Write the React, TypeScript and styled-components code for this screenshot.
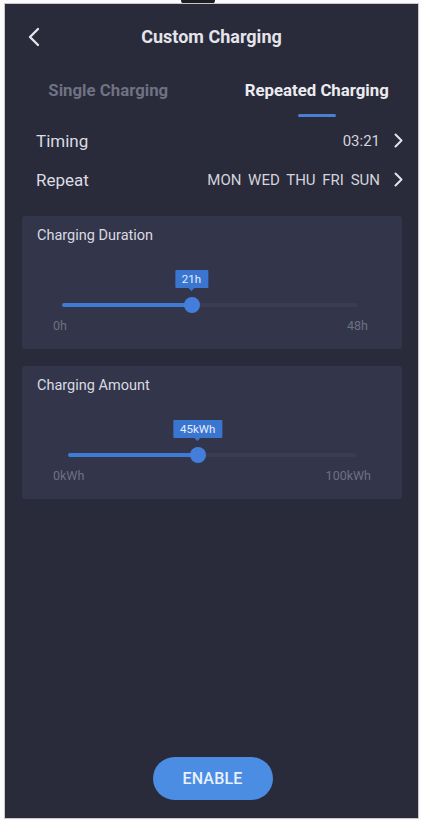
import * as React from "react";
import styled, { createGlobalStyle } from "styled-components";

const GlobalStyle = createGlobalStyle`
  html, body {
    margin: 0;
    padding: 0;
    background: #fbfbfb;
    font-family: Roboto, "Noto Sans", "Liberation Sans", sans-serif;
  }
`;

const Page = styled.div`
  width: 421px;
  height: 820px;
  display: flex;
  flex-direction: column;
  align-items: flex-start;
  overflow: hidden;
`;

const Notch = styled.div`
  align-self: center;
  width: 34px;
  height: 4px;
  margin-left: -26px;
  background: #1d1d22;
  border-radius: 0 0 17px 17px;
`;

const Phone = styled.div`
  width: 413px;
  height: 814px;
  margin-left: 5px;
  background: #292a3a;
  box-shadow: 0 0 0 1px #c9c9cc;
  display: flex;
  flex-direction: column;
  color: #e8e8ec;
`;

const Header = styled.div`
  height: 66px;
  display: flex;
  align-items: center;
  justify-content: center;
  position: relative;
`;

const BackButton = styled.div`
  position: absolute;
  left: 22px;
  top: 22px;
  width: 14px;
  height: 22px;
  display: flex;
  align-items: center;
  justify-content: center;
`;

const Title = styled.div`
  font-size: 18px;
  font-weight: 700;
  color: #e4e4ea;
  margin-top: -1px;
`;

const Tabs = styled.div`
  display: grid;
  grid-template-columns: 1fr 1fr;
  height: 51px;
`;

const Tab = styled.div<{ $active?: boolean }>`
  display: flex;
  flex-direction: column;
  align-items: center;
  padding-top: 10px;
  font-size: 16.8px;
  font-weight: 700;
  line-height: 20px;
  color: ${(p) => (p.$active ? "#ececf0" : "#6f7282")};
  margin-left: ${(p) => (p.$active ? "4px" : "0")};
`;

const TabLine = styled.div<{ $active?: boolean }>`
  margin-top: 14px;
  width: 38px;
  height: 3px;
  border-radius: 2px;
  background: ${(p) => (p.$active ? "#4a7fd4" : "transparent")};
`;

const SettingRow = styled.div`
  height: 39px;
  display: flex;
  align-items: center;
  padding: 0 15px 0 31px;
`;

const RowLabel = styled.div`
  flex: 1;
  font-size: 17px;
  color: #dcdce2;
`;

const RowValue = styled.div`
  font-size: 15px;
  color: #d4d4dc;
  word-spacing: 3px;
  margin-right: 14px;
`;

const Card = styled.div`
  margin: 17px 16px 0 17px;
  height: 133px;
  background: #33364a;
  border-radius: 3px;
  display: flex;
  flex-direction: column;
`;

const CardTitle = styled.div`
  padding: 12px 0 0 15px;
  font-size: 14.5px;
  line-height: 16px;
  color: #dadae2;
`;

const SliderArea = styled.div<{ $left: number; $right: number }>`
  position: relative;
  margin: 59px ${(p) => p.$right}px 0 ${(p) => p.$left}px;
  height: 4px;
`;

const Track = styled.div`
  height: 4px;
  border-radius: 2px;
  background: #393d52;
`;

const TrackFill = styled.div`
  height: 4px;
  border-radius: 2px;
  background: #3e7bd6;
`;

const Thumb = styled.div`
  position: absolute;
  top: -6px;
  width: 16px;
  height: 16px;
  margin-left: -8px;
  border-radius: 50%;
  background: #437fda;
`;

const Bubble = styled.div`
  position: absolute;
  top: -33px;
  transform: translateX(-50%);
  padding: 0 7px;
  height: 18px;
  line-height: 18px;
  font-size: 11.5px;
  color: #e6eeff;
  background: #3a76cf;
  border-radius: 1px;
  white-space: nowrap;

  &::after {
    content: "";
    position: absolute;
    left: 50%;
    bottom: -3px;
    margin-left: -3px;
    border-left: 3px solid transparent;
    border-right: 3px solid transparent;
    border-top: 3px solid #3a76cf;
  }
`;

const RangeLabels = styled.div<{ $right: number }>`
  display: flex;
  justify-content: space-between;
  margin-top: 11px;
  padding: 0 ${(p) => p.$right}px 0 31px;
  font-size: 12.5px;
  color: #6d7083;
`;

const Spacer = styled.div`
  flex: 1;
`;

const EnableButton = styled.button`
  align-self: center;
  margin: 0 0 18px 2px;
  width: 120px;
  height: 43px;
  border: none;
  border-radius: 22px;
  background: #4a8de2;
  color: #e9f1ff;
  font-family: inherit;
  font-size: 16px;
  font-weight: 500;
  letter-spacing: 0.2px;
`;

const Chevron = ({ dir = "right" }: { dir?: "left" | "right" }) =>
  dir === "right" ? (
    <svg width="9" height="15" viewBox="0 0 9 15" fill="none">
      <path
        d="M1.5 1.5 L7.5 7.5 L1.5 13.5"
        stroke="#e4e4ea"
        strokeWidth="2"
        strokeLinecap="round"
        strokeLinejoin="round"
      />
    </svg>
  ) : (
    <svg width="12" height="20" viewBox="0 0 12 20" fill="none">
      <path
        d="M10 2 L2 10 L10 18"
        stroke="#e4e4ea"
        strokeWidth="2.4"
        strokeLinecap="round"
        strokeLinejoin="round"
      />
    </svg>
  );

interface SliderCardProps {
  title: string;
  value: number;
  max: number;
  unit: string;
  left: number;
  right: number;
  labelRight: number;
}

const SliderCard = ({ title, value, max, unit, left, right, labelRight }: SliderCardProps) => {
  const pct = (value / max) * 100;
  return (
    <Card>
      <CardTitle>{title}</CardTitle>
      <SliderArea $left={left} $right={right}>
        <Track>
          <TrackFill style={{ width: `${pct}%` }} />
        </Track>
        <Bubble style={{ left: `${pct}%` }}>
          {value}
          {unit}
        </Bubble>
        <Thumb style={{ left: `${pct}%` }} />
      </SliderArea>
      <RangeLabels $right={labelRight}>
        <span>0{unit}</span>
        <span>
          {max}
          {unit}
        </span>
      </RangeLabels>
    </Card>
  );
};

export default function App() {
  return (
    <>
      <GlobalStyle />
      <Page>
        <Notch />
        <Phone>
          <Header>
            <BackButton>
              <Chevron dir="left" />
            </BackButton>
            <Title>Custom Charging</Title>
          </Header>
          <Tabs>
            <Tab>
              Single Charging
              <TabLine />
            </Tab>
            <Tab $active>
              Repeated Charging
              <TabLine $active />
            </Tab>
          </Tabs>
          <SettingRow>
            <RowLabel>Timing</RowLabel>
            <RowValue>03:21</RowValue>
            <Chevron />
          </SettingRow>
          <SettingRow>
            <RowLabel>Repeat</RowLabel>
            <RowValue>MON WED THU FRI SUN</RowValue>
            <Chevron />
          </SettingRow>
          <SliderCard
            title="Charging Duration"
            value={21}
            max={48}
            unit="h"
            left={40}
            right={44}
            labelRight={34}
          />
          <SliderCard
            title="Charging Amount"
            value={45}
            max={100}
            unit="kWh"
            left={46}
            right={46}
            labelRight={31}
          />
          <Spacer />
          <EnableButton>ENABLE</EnableButton>
        </Phone>
      </Page>
    </>
  );
}
